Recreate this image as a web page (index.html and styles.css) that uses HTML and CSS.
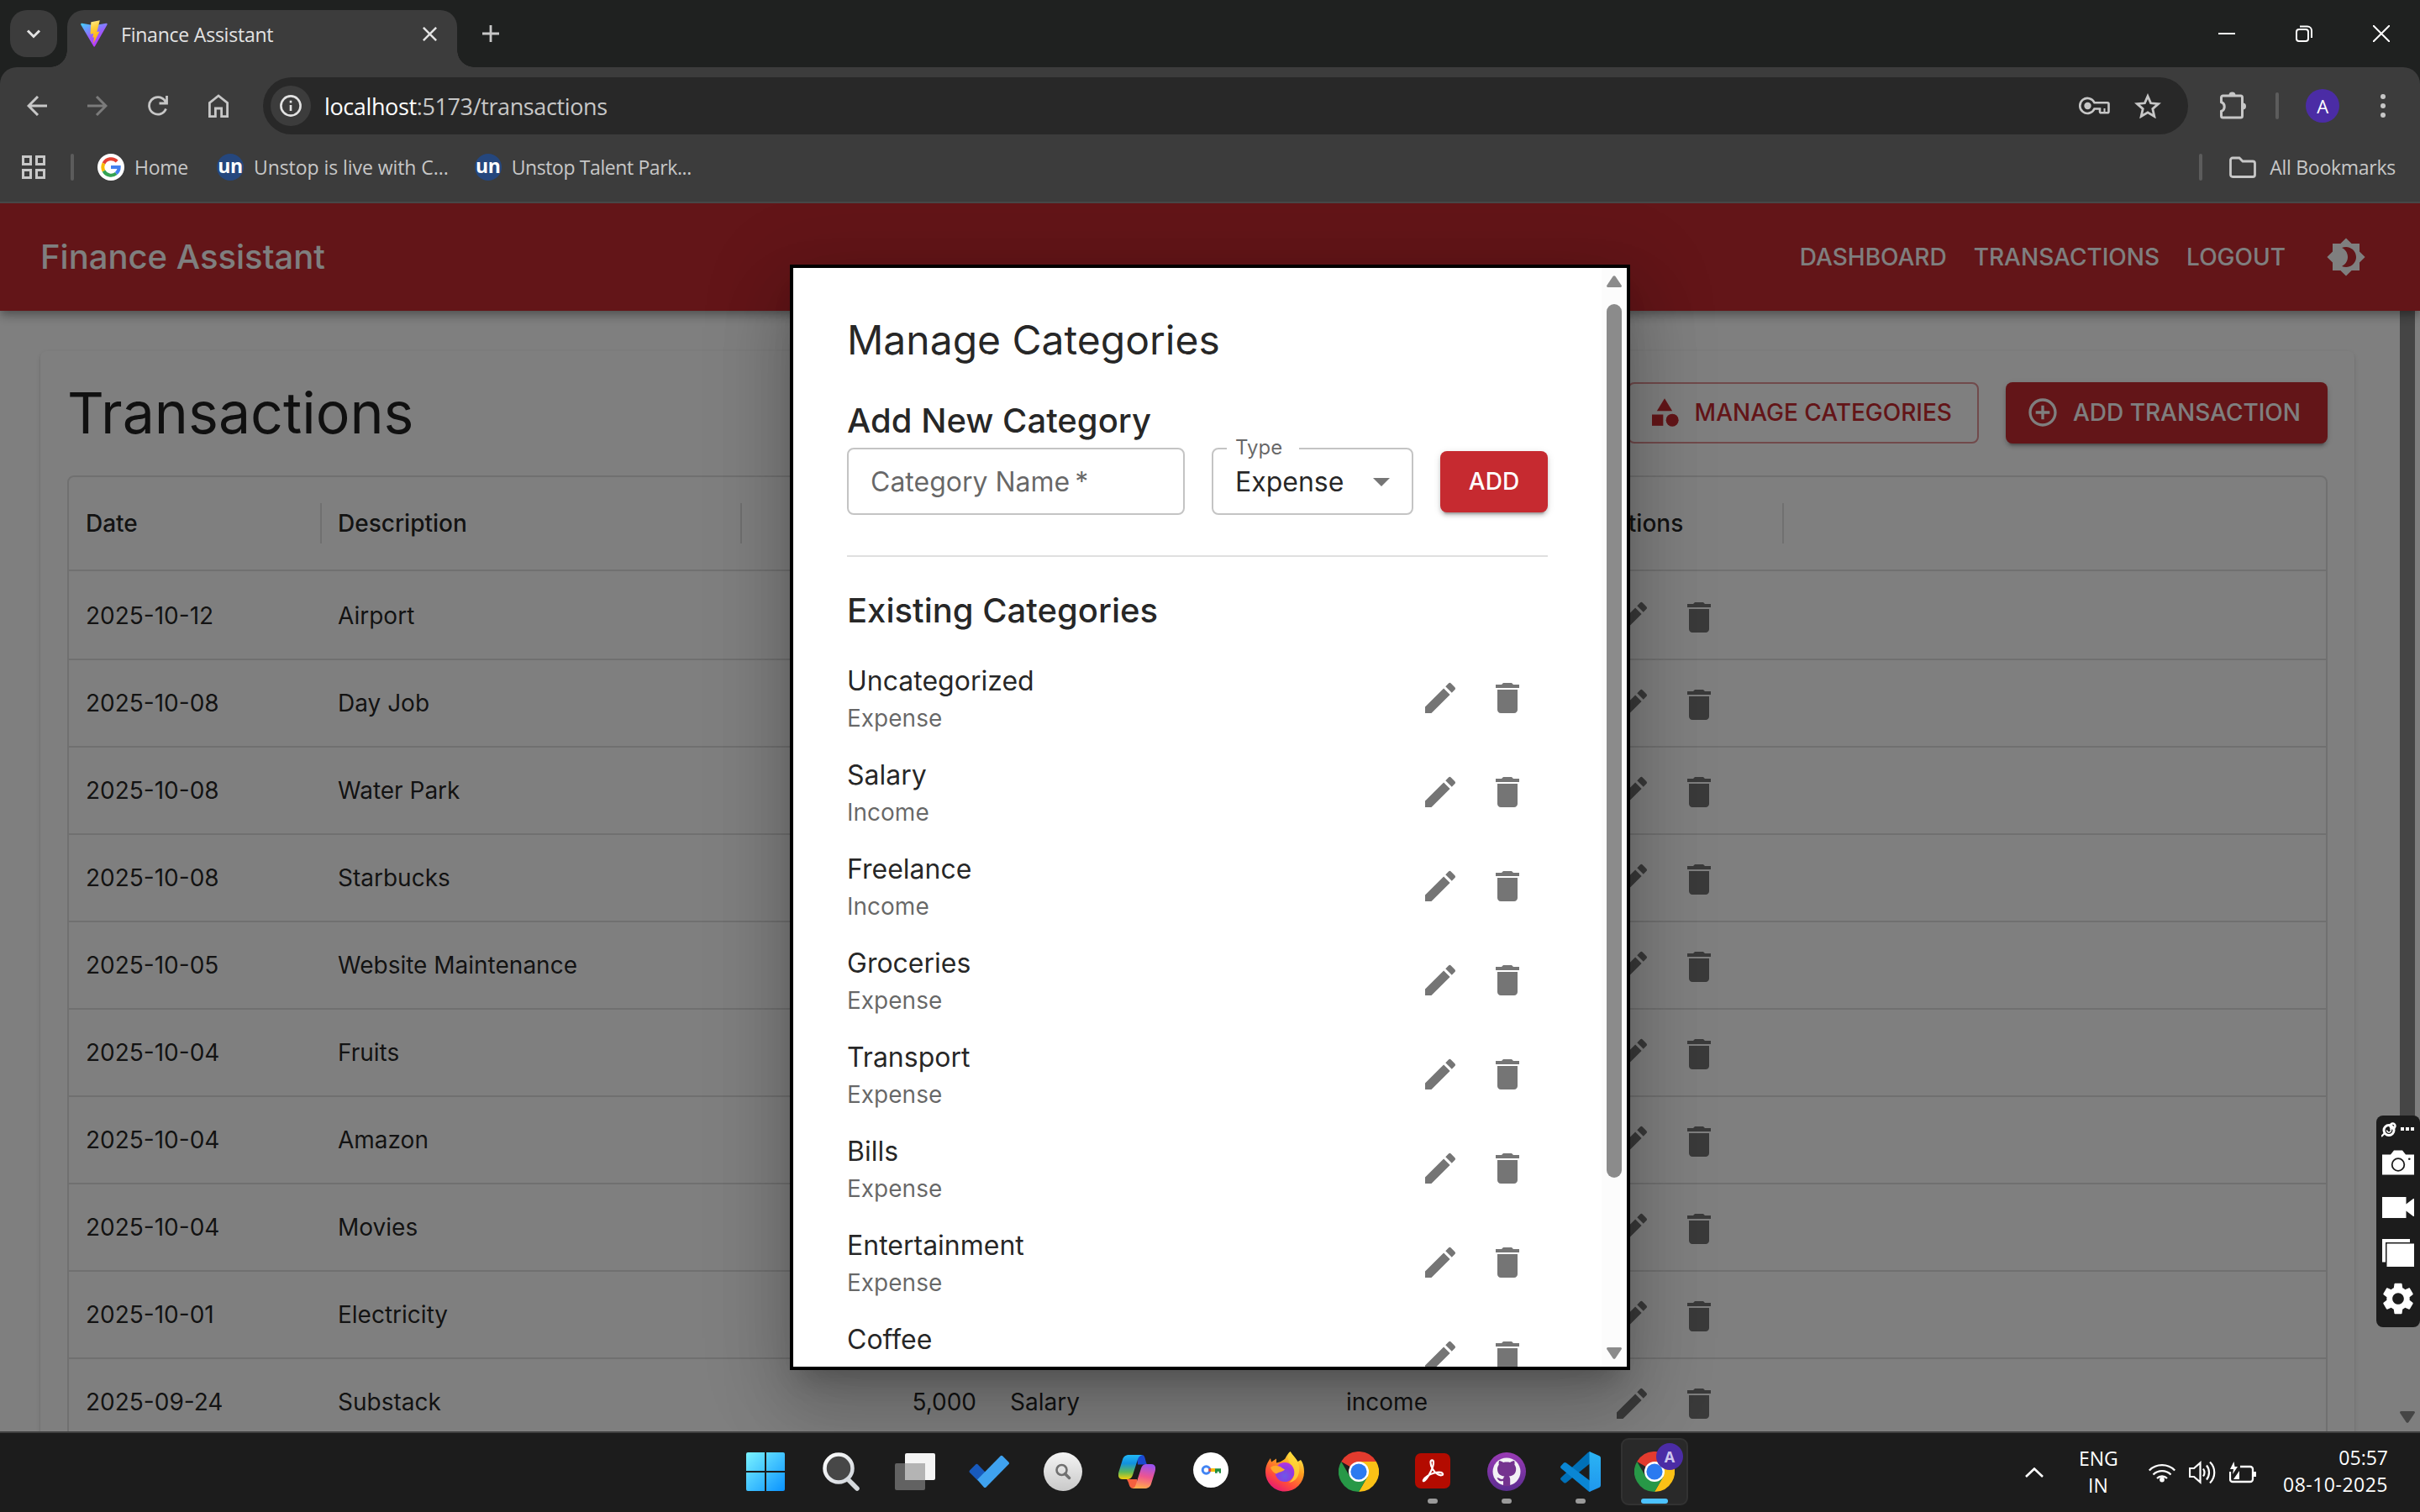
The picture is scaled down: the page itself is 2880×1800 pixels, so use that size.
FILE: index.html
```html
<!DOCTYPE html>
<html lang="en">
<head>
<meta charset="utf-8">
<title>Finance Assistant</title>
<link rel="stylesheet" href="styles.css">
</head>
<body>
<svg class="defs" width="0" height="0">
  <defs>
    <linearGradient id="vite-a" x1="0" y1="0" x2="0.6" y2="1"><stop offset="0" stop-color="#41d1ff"/><stop offset="0.6" stop-color="#9b5cff"/><stop offset="1" stop-color="#bd34fe"/></linearGradient>
    <linearGradient id="vite-b" x1="0.4" y1="0" x2="0.6" y2="1"><stop offset="0" stop-color="#ffea83"/><stop offset="0.3" stop-color="#ffcf3a"/><stop offset="1" stop-color="#ffa800"/></linearGradient>
    <linearGradient id="win" x1="0" y1="0" x2="1" y2="1" gradientUnits="objectBoundingBox"><stop offset="0" stop-color="#7af3ff"/><stop offset="1" stop-color="#0a93ff"/></linearGradient>
    <linearGradient id="lens" x1="0" y1="0" x2="1" y2="1"><stop offset="0" stop-color="#fff"/><stop offset="1" stop-color="#cfd4da"/></linearGradient>
    <linearGradient id="disc" x1="0" y1="0" x2="0" y2="1"><stop offset="0" stop-color="#f4f4f4"/><stop offset="1" stop-color="#c9c9c9"/></linearGradient>
    <linearGradient id="cop-a" x1="0" y1="0" x2="0" y2="1"><stop offset="0" stop-color="#22b8f5"/><stop offset="0.35" stop-color="#1191e0"/><stop offset="0.7" stop-color="#5cb85a"/><stop offset="1" stop-color="#f5cf0a"/></linearGradient>
    <linearGradient id="cop-b" x1="0.6" y1="0" x2="0.4" y2="1"><stop offset="0" stop-color="#9a52f0"/><stop offset="0.5" stop-color="#ee5590"/><stop offset="1" stop-color="#ffab4a"/></linearGradient>
    <linearGradient id="fox-a" x1="0.8" y1="0" x2="0.2" y2="1"><stop offset="0" stop-color="#fff44f"/><stop offset="0.35" stop-color="#ff9f1e"/><stop offset="0.7" stop-color="#ff4a3c"/><stop offset="1" stop-color="#e1107e"/></linearGradient>
    <radialGradient id="fox-b" cx="0.5" cy="0.7" r="0.7"><stop offset="0" stop-color="#6a5ae8"/><stop offset="0.6" stop-color="#9038e0"/><stop offset="1" stop-color="#b833e1"/></radialGradient>
    <linearGradient id="gh" x1="0" y1="0" x2="0" y2="1"><stop offset="0" stop-color="#9a3bb5"/><stop offset="1" stop-color="#5b2d90"/></linearGradient>
    <linearGradient id="vs" x1="0" y1="0" x2="0" y2="1"><stop offset="0" stop-color="#2bb4f4"/><stop offset="1" stop-color="#1f97ee"/></linearGradient>
  </defs>
  <symbol id="i-edit" viewBox="0 0 24 24"><path d="M3 17.25V21h3.75L17.81 9.94l-3.75-3.75zM20.71 7.04c.39-.39.39-1.02 0-1.41l-2.34-2.34a.996.996 0 0 0-1.41 0l-1.83 1.83 3.75 3.75z"/></symbol>
  <symbol id="i-delete" viewBox="0 0 24 24"><path d="M6 19c0 1.1.9 2 2 2h8c1.1 0 2-.9 2-2V7H6zM19 4h-3.5l-1-1h-5l-1 1H5v2h14z"/></symbol>
  <symbol id="i-chrome" viewBox="0 0 48 48">
    <path d="M24 24 3.2 12A24 24 0 0 1 44.8 12z" fill="#e33b2e"/>
    <path d="M24 24 44.8 12A24 24 0 0 1 24 48L34.4 30z" fill="#fbc116"/>
    <path d="M24 24h10.4L24 48A24 24 0 0 1 3.2 12L13.6 30z" fill="#279847"/>
    <path d="M24 12h20.8a24 24 0 0 1-10.4 18z" fill="#fbc116"/>
    <path d="M34.4 30 24 48 22 34z" fill="#279847"/>
    <circle cx="24" cy="24" r="12" fill="#fff"/><circle cx="24" cy="24" r="9.6" fill="#2b7af0"/>
  </symbol>
</svg>

<header class="browser">
  <div class="tabstrip">
    <button class="tab-search"><svg width="20" height="20" viewBox="0 0 20 20" fill="none" stroke="#e3e3e3" stroke-width="3"><path d="m3 6.500 7 7 7-7"/></svg></button>
    <div class="tab">
      <svg width="32" height="32" viewBox="0 0 32 32"><path d="M31.500 5.500 17 31a1 1 0 0 1-1.700 0L.300 5.500C-.1 4.500.500 3.500 1.600 3.700L16 6.300l14.300-2.600c1.100-.2 1.700.8 1.200 1.800z" fill="url(#vite-a)"/><path d="m22.800.300-10.200 2a.5.5 0 0 0-.3.400l-.7 13.500c0 .3.300.5.600.4l3-.6-.9 4.800 2-.5-1.500 8 7.700-14.900-3.200.600z" fill="url(#vite-b)"/></svg>
      <span class="tab-title">Finance Assistant</span>
      <svg class="tab-close" width="20" height="20" viewBox="0 0 20 20" stroke="#e3e3e3" stroke-width="3"><path d="M1 1l18 18M19 1 1 19"/></svg>
    </div>
    <svg class="newtab" width="20" height="20" viewBox="0 0 20 20" stroke="#c7c7c7" stroke-width="2.800"><path d="M10 0v20M0 10h20"/></svg>
    <div class="window-controls">
      <svg width="20" height="20" viewBox="0 0 20 20" stroke="#fff" stroke-width="2"><path d="M0 10h20"/></svg>
      <svg width="20" height="20" viewBox="0 0 20 20" fill="none" stroke="#fff" stroke-width="2"><rect x="1" y="5" width="14" height="14" rx="3"/><path d="M5 1.500h9a5 5 0 0 1 5 5V15"/></svg>
      <svg width="20" height="20" viewBox="0 0 20 20" stroke="#fff" stroke-width="2"><path d="M0 0l20 20M20 0 0 20"/></svg>
    </div>
  </div>
  <div class="toolbar">
    <div class="nav-icons">
      <svg width="24" height="24" viewBox="0 0 24 24" fill="none" stroke="#c7c7c7" stroke-width="3"><path d="M24 12H2M13 1 2 12l11 11"/></svg>
      <svg width="24" height="24" viewBox="0 0 24 24" fill="none" stroke="#7b7b7b" stroke-width="3"><path d="M0 12h22M11 1l11 11-11 11"/></svg>
      <svg width="24" height="24" viewBox="0 0 24 24" fill="none" stroke="#c7c7c7" stroke-width="2.800"><path d="M21.500 15.500A10.300 10.300 0 1 1 20 5.500l2 3.500M22.500 0v9h-9"/></svg>
      <svg width="24" height="28" viewBox="0 0 24 28" fill="none" stroke="#c7c7c7" stroke-width="2.800"><path d="M1.400 26.600V10.500L12 2l10.600 8.500v16.100h-7V17H8.400v9.600z"/></svg>
    </div>
    <div class="omnibox">
      <span class="site-info"><svg width="26" height="26" viewBox="0 0 26 26" fill="none" stroke="#e3e3e3" stroke-width="2.600"><circle cx="13" cy="13" r="11.600"/><path d="M13 12v7M13 6.800v2.800"/></svg></span>
      <span class="url"><b>localhost</b>:5173/transactions</span>
      <svg class="key" width="37" height="22" viewBox="0 0 37 22" fill="none" stroke="#c7c7c7" stroke-width="2.600"><path d="M18.500 7.300h15.500a1.500 1.500 0 0 1 1.500 1.500v9a1.500 1.500 0 0 1-1.500 1.500h-7.500a1.500 1.500 0 0 1-1.500-1.500V14.500h-6.500A9 9 0 1 1 18.500 7.300z"/><path d="M30.500 14v5" stroke-width="2"/><circle cx="10.500" cy="11" r="4.200" fill="#c7c7c7" stroke="none"/></svg>
      <svg class="star" width="32" height="30" viewBox="0 0 32 30" fill="none" stroke="#c7c7c7" stroke-width="2.800"><path d="m16 3.500 3.600 8.300 9 .8-6.800 6 2 8.900-7.800-4.700-7.800 4.700 2-8.900-6.800-6 9-.8z"/></svg>
    </div>
    <svg class="puzzle" width="36" height="34" viewBox="0 0 36 34" fill="none" stroke="#c7c7c7" stroke-width="3"><path d="M5.500 6h21a2 2 0 0 1 2 2v22a2 2 0 0 1-2 2H5.500a2 2 0 0 1-2-2v-5.500c5-2 5-9 0-11V8a2 2 0 0 1 2-2z"/><path d="M12.500 5.500a4 4 0 0 1 8 0zM29 14.500a4 4 0 0 1 0 8z" fill="#c7c7c7" stroke="none"/></svg>
    <i class="sep"></i>
    <span class="avatar">A</span>
    <svg class="kebab" width="6" height="28" viewBox="0 0 6 28" fill="#c7c7c7"><circle cx="3" cy="3" r="3"/><circle cx="3" cy="14" r="3"/><circle cx="3" cy="25" r="3"/></svg>
  </div>
  <div class="bookmarks">
    <svg width="28" height="28" viewBox="0 0 28 28" fill="none" stroke="#c7c7c7" stroke-width="3"><path d="M1.500 1.500h9v9h-9zM17.500 1.500h9v9h-9zM1.500 17.500h9v9h-9zM17.500 17.500h9v9h-9z"/></svg>
    <i class="sep"></i>
    <a class="bm"><svg width="32" height="32" viewBox="0 0 32 32"><circle cx="16" cy="16" r="16" fill="#fff"/><g fill="none" stroke-width="4"><path d="M23.200 9.200A9.700 9.700 0 0 0 7.500 11.500" stroke="#e34133"/><path d="M7.500 11.500a9.700 9.700 0 0 0 0 9" stroke="#f9bb05"/><path d="M7.500 20.500a9.700 9.700 0 0 0 14.700 3" stroke="#34a353"/><path d="M16 16h9.700a9.700 9.700 0 0 1-3.500 7.500" stroke="#4280ef"/></g></svg>Home</a>
    <a class="bm wide"><span class="un">un</span>Unstop is live with C...</a>
    <a class="bm narrow"><span class="un">un</span>Unstop Talent Park...</a>
    <i class="sep sep-right"></i>
    <a class="bm all"><svg width="32" height="26" viewBox="0 0 32 26" fill="none" stroke="#c7c7c7" stroke-width="2.800"><path d="M4 2h8l4 4h12a2.500 2.500 0 0 1 2.500 2.500V22a2.500 2.500 0 0 1-2.500 2.500H4A2.500 2.500 0 0 1 1.500 22V4.500A2.500 2.500 0 0 1 4 2z"/></svg>All Bookmarks</a>
  </div>
</header>

<main class="page">
  <nav class="appbar">
    <span class="brand">Finance Assistant</span>
    <a>DASHBOARD</a><a>TRANSACTIONS</a><a>LOGOUT</a>
    <svg width="48" height="48" viewBox="0 0 24 24" fill="#fff"><path d="M20 8.690V4h-4.690L12 .690 8.690 4H4v4.690L.690 12 4 15.310V20h4.690L12 23.310 15.310 20H20v-4.690L23.310 12zM12 18c-.89 0-1.740-.2-2.500-.55C11.560 16.500 13 14.420 13 12s-1.440-4.500-3.500-5.450C10.260 6.200 11.110 6 12 6c3.310 0 6 2.690 6 6s-2.690 6-6 6"/></svg>
  </nav>
  <div class="content">
    <section class="paper">
      <div class="paper-head">
        <h1>Transactions</h1>
        <button class="btn outlined"><svg width="40" height="40" viewBox="0 0 24 24"><path d="m12 2-5.500 9h11z"/><circle cx="17.500" cy="17.500" r="4.500"/><path d="M3 13.500h8v8H3z"/></svg>MANAGE CATEGORIES</button>
        <button class="btn contained"><svg width="40" height="40" viewBox="0 0 24 24"><path d="M13 7h-2v4H7v2h4v4h2v-4h4v-2h-4zm-1-5C6.480 2 2 6.480 2 12s4.480 10 10 10 10-4.480 10-10S17.520 2 12 2m0 18c-4.410 0-8-3.590-8-8s3.590-8 8-8 8 3.590 8 8-3.590 8-8 8"/></svg>ADD TRANSACTION</button>
      </div>
      <div class="grid">
        <div class="row head"><span>Date</span><span>Description</span><span></span><span></span><span></span><span>Actions</span></div>
        <div class="row"><span>2025-10-12</span><span>Airport</span><span></span><span></span><span></span><span class="act"><svg><use href="#i-edit"/></svg><svg><use href="#i-delete"/></svg></span></div>
        <div class="row"><span>2025-10-08</span><span>Day Job</span><span></span><span></span><span></span><span class="act"><svg><use href="#i-edit"/></svg><svg><use href="#i-delete"/></svg></span></div>
        <div class="row"><span>2025-10-08</span><span>Water Park</span><span></span><span></span><span></span><span class="act"><svg><use href="#i-edit"/></svg><svg><use href="#i-delete"/></svg></span></div>
        <div class="row"><span>2025-10-08</span><span>Starbucks</span><span></span><span></span><span></span><span class="act"><svg><use href="#i-edit"/></svg><svg><use href="#i-delete"/></svg></span></div>
        <div class="row"><span>2025-10-05</span><span>Website Maintenance</span><span></span><span></span><span></span><span class="act"><svg><use href="#i-edit"/></svg><svg><use href="#i-delete"/></svg></span></div>
        <div class="row"><span>2025-10-04</span><span>Fruits</span><span></span><span></span><span></span><span class="act"><svg><use href="#i-edit"/></svg><svg><use href="#i-delete"/></svg></span></div>
        <div class="row"><span>2025-10-04</span><span>Amazon</span><span></span><span></span><span></span><span class="act"><svg><use href="#i-edit"/></svg><svg><use href="#i-delete"/></svg></span></div>
        <div class="row"><span>2025-10-04</span><span>Movies</span><span></span><span></span><span></span><span class="act"><svg><use href="#i-edit"/></svg><svg><use href="#i-delete"/></svg></span></div>
        <div class="row"><span>2025-10-01</span><span>Electricity</span><span></span><span></span><span></span><span class="act"><svg><use href="#i-edit"/></svg><svg><use href="#i-delete"/></svg></span></div>
        <div class="row"><span>2025-09-24</span><span>Substack</span><span class="num">5,000</span><span>Salary</span><span>income</span><span class="act"><svg><use href="#i-edit"/></svg><svg><use href="#i-delete"/></svg></span></div>
      </div>
    </section>
    <div class="page-scroll"><i class="thumb"></i><svg width="18" height="14" viewBox="0 0 18 14" fill="#8b8b8b"><path d="M1.500 0h15A1.500 1.500 0 0 1 17.700 2.300L10.500 13a2 2 0 0 1-3 0L.300 2.300A1.500 1.500 0 0 1 1.500 0z"/></svg></div>
  </div>

  <div class="backdrop">
    <div class="modal">
      <div class="modal-body">
        <h2>Manage Categories</h2>
        <h3>Add New Category</h3>
        <div class="form">
          <div class="field name">Category Name<span class="req">*</span></div>
          <div class="field type"><label>Type</label>Expense<svg width="48" height="48" viewBox="0 0 24 24" fill="#757575"><path d="m7 10 5 5 5-5z"/></svg></div>
          <button class="btn contained add">ADD</button>
        </div>
        <hr>
        <h3>Existing Categories</h3>
        <ul class="cats">
          <li><div><p>Uncategorized</p><small>Expense</small></div><svg><use href="#i-edit"/></svg><svg><use href="#i-delete"/></svg></li>
          <li><div><p>Salary</p><small>Income</small></div><svg><use href="#i-edit"/></svg><svg><use href="#i-delete"/></svg></li>
          <li><div><p>Freelance</p><small>Income</small></div><svg><use href="#i-edit"/></svg><svg><use href="#i-delete"/></svg></li>
          <li><div><p>Groceries</p><small>Expense</small></div><svg><use href="#i-edit"/></svg><svg><use href="#i-delete"/></svg></li>
          <li><div><p>Transport</p><small>Expense</small></div><svg><use href="#i-edit"/></svg><svg><use href="#i-delete"/></svg></li>
          <li><div><p>Bills</p><small>Expense</small></div><svg><use href="#i-edit"/></svg><svg><use href="#i-delete"/></svg></li>
          <li><div><p>Entertainment</p><small>Expense</small></div><svg><use href="#i-edit"/></svg><svg><use href="#i-delete"/></svg></li>
          <li><div><p>Coffee</p></div><svg><use href="#i-edit"/></svg><svg><use href="#i-delete"/></svg></li>
        </ul>
      </div>
      <div class="modal-scroll">
        <svg width="18" height="14" viewBox="0 0 18 14" fill="#8b8b8b"><path d="M1.500 14h15a1.500 1.500 0 0 0 1.200-2.300L10.500 1a2 2 0 0 0-3 0L.300 11.700A1.500 1.500 0 0 0 1.500 14z"/></svg>
        <i class="thumb"></i>
        <svg width="18" height="14" viewBox="0 0 18 14" fill="#8b8b8b"><path d="M1.500 0h15A1.500 1.500 0 0 1 17.700 2.300L10.500 13a2 2 0 0 1-3 0L.300 2.300A1.500 1.500 0 0 1 1.500 0z"/></svg>
      </div>
    </div>
  </div>

  <aside class="recorder">
    <svg width="40" height="18" viewBox="0 0 40 18"><g fill="none" stroke="#fff"><circle cx="9" cy="9.500" r="6" stroke-width="3"/><circle cx="13.500" cy="4.500" r="3" stroke-width="2.400"/><path d="m0 17 4-4" stroke-width="2"/><path d="M6.500 9.500a2.500 2.500 0 1 0 4-2" stroke-width="1.600"/></g><path d="M23 6h4v4h-4zM29 6h4v4h-4zM35 6h4v4h-4z" fill="#fff"/></svg>
    <svg width="38" height="30" viewBox="0 0 38 30"><path d="M0 5.500h10L14 .500h10l4 5h10V29.500H0z" fill="#fff"/><circle cx="19" cy="17.500" r="7.300" fill="none" stroke="#1c1c1c" stroke-width="1.800"/><circle cx="32.300" cy="10.800" r="1.300" fill="#1c1c1c"/></svg>
    <svg width="38" height="25" viewBox="0 0 38 25" fill="#fff"><path d="M0 0h28.500v8.500L37 2h1v21h-1l-8.500-6.500V25H0z"/></svg>
    <svg width="38" height="33" viewBox="0 0 38 33" fill="#fff"><path d="M0 0h33v4H4v23.500H0z"/><path d="M5.500 5.500H38V33H5.500z"/></svg>
    <svg width="38" height="38" viewBox="2.200 2 19.600 20" fill="#fff"><path d="M19.140 12.940c.04-.3.060-.61.060-.94 0-.32-.02-.64-.07-.94l2.030-1.580c.18-.14.230-.41.120-.61l-1.920-3.320c-.12-.22-.37-.29-.59-.22l-2.390.960c-.5-.38-1.030-.7-1.620-.94l-.36-2.540c-.04-.24-.24-.41-.48-.41h-3.840c-.24 0-.43.170-.47.410l-.36 2.540c-.59.240-1.130.570-1.620.940l-2.390-.96c-.22-.08-.47 0-.59.220L2.740 8.870c-.12.210-.08.470.120.610l2.030 1.580c-.05.300-.09.630-.09.940s.02.640.070.940l-2.030 1.580c-.18.140-.23.410-.12.610l1.920 3.320c.12.220.37.290.59.220l2.390-.96c.5.380 1.030.7 1.620.94l.36 2.540c.05.240.240.410.480.410h3.840c.24 0 .44-.17.470-.41l.36-2.540c.59-.24 1.130-.56 1.620-.94l2.390.96c.22.080.470 0 .590-.22l1.920-3.320c.12-.22.070-.47-.12-.61zM12 15.600c-1.980 0-3.600-1.620-3.600-3.600s1.620-3.600 3.600-3.600 3.600 1.620 3.600 3.600-1.620 3.600-3.600 3.600"/></svg>
  </aside>
</main>

<footer class="taskbar">
  <div class="apps">
    <span><svg width="46" height="46" viewBox="0 0 46 46" fill="url(#win)"><path d="M2 0h20v22H0V2a2 2 0 0 1 2-2zM24 0h20a2 2 0 0 1 2 2v20H24zM0 24h22v22H2a2 2 0 0 1-2-2zM24 24h22v20a2 2 0 0 1-2 2H24z"/></svg></span>
    <span><svg width="46" height="46" viewBox="0 0 46 46"><path d="m31 32 11 11" stroke="#d5d9dd" stroke-width="5.500" stroke-linecap="round"/><circle cx="20" cy="19" r="16.500" fill="#474747" stroke="url(#lens)" stroke-width="4.500"/></svg></span>
    <span><svg width="50" height="46" viewBox="0 0 50 46"><rect x="13" y="1" width="36" height="32" rx="2" fill="#f4f4f4"/><rect x="1" y="13" width="36" height="32" rx="2" fill="#6c6c6c" fill-opacity=".88"/><path d="M13 13h24v20H13z" fill="#b4b4b4"/></svg></span>
    <span><svg width="48" height="40" viewBox="0 0 48 40"><path d="M1 18.500 8 11.500a2 2 0 0 1 2.800 0L20 21l-9.500 9.500L1 21a2 2 0 0 1 0-2.500z" fill="#185abd"/><path d="M10 29.500 37.500 1.500a2 2 0 0 1 2.800 0l7 7a2 2 0 0 1 0 2.800L20.500 38.500a2 2 0 0 1-2.600 0z" fill="#3fa2ef"/></svg></span>
    <span><svg width="46" height="46" viewBox="0 0 46 46"><circle cx="23" cy="23" r="23" fill="url(#disc)"/><circle cx="21.500" cy="21" r="6" fill="none" stroke="#707070" stroke-width="2.600"/><path d="m25.500 25.500 5 5" stroke="#707070" stroke-width="3.400" stroke-linecap="round"/></svg></span>
    <span><svg width="44" height="40" viewBox="0 0 44 40"><path d="M22 0h6c3 0 3.500 3 5 9l1 2.500H23z" fill="#1a49d0"/><path d="M10 29h12l1 11h-5c-4 0-5-3-6-7z" fill="#f5603f"/><path d="M13 0h17c-4 0-6 2-7.500 7L17 24c-1.200 3.500-3 5-6.500 5H5c-5 0-6-4-4.500-9L5 5.500C6.300 1.500 9 0 13 0z" fill="url(#cop-a)"/><path d="M31 40H15c4 0 5-2 6.500-7L27 16c1.200-3.500 3-5 6.500-5H39c5 0 6 4 4.500 9L39 34.500C37.700 38.500 35 40 31 40z" fill="url(#cop-b)"/></svg></span>
    <span><svg width="42" height="46" viewBox="0 0 42 46"><circle cx="21" cy="21" r="21" fill="#fff"/><path d="M20 21h6" stroke="#fbbc04" stroke-width="4"/><path d="M26 19.200h7v5.600h-2.300v-2h-2v2H26z" fill="#1e8e3e"/><circle cx="15.500" cy="21" r="4.300" fill="none" stroke="#4285f4" stroke-width="3"/><path d="M18.500 19.200h2.500v3.600h-2.500z" fill="#ea4335"/></svg></span>
    <span><svg width="48" height="48" viewBox="0 0 48 48"><path d="M30.500 0c2 3.500 6.500 7.500 9 12l3.500-2c3.500 5 4 10 4 14.500A23 23 0 0 1 1 24.500C1 17 4 12 7 8l1 4.500 6-4v5l4-1c4-2 6-3 7-5C26.500 4.500 28 2 30.500 0z" fill="url(#fox-a)"/><circle cx="24" cy="24.500" r="11.500" fill="url(#fox-b)"/><path d="M7 19c5-4 11-2 17 2.500-3 3-7 2.500-10 5-3-1-6-4-7-7.500z" fill="#ffa72b"/><path d="M30.500 0C36 8 43 13 41 24c-1 8-6 12-12 13 8-6 8-15 3-21-4-4-6-10-1.500-16z" fill="#ffd838" fill-opacity=".75"/></svg></span>
    <span><svg width="48" height="48"><use href="#i-chrome"/></svg></span>
    <span class="running"><svg width="42" height="46" viewBox="0 0 42 46"><rect width="42" height="42" rx="7" fill="#b30b00" y="1"/><path d="M10 33c2-4 8-7 13-8.500 4-1 9-1 10 1s-3 2.500-6 .5c-5-3-8.500-9-8.500-14 0-3.500 3.500-3.500 3.500 0 0 6-5 15-8.500 19.500C11.500 34.500 9 35 10 33z" fill="none" stroke="#fff" stroke-width="2.200"/></svg></span>
    <span class="running"><svg width="46" height="46" viewBox="0 0 46 46"><circle cx="23" cy="23" r="23" fill="url(#gh)"/><circle cx="23" cy="23" r="16.500" fill="#f3f2f5"/><path d="M19 40v-6c-5 1-6-1.500-7.500-3.500 3-1 3 2.500 7.500 1 .2-1.500.8-2.300 1.500-3-5-.6-8.500-2.500-8.500-9 0-2 .8-3.500 1.800-4.800-.3-1.500-.3-3 .3-4.800 2 0 3.500 1 5 2 2.500-.6 5.500-.6 8 0 1.500-1 3-2 5-2 .6 1.800.6 3.300.3 4.800 1 1.300 1.800 2.800 1.800 4.800 0 6.500-3.500 8.400-8.500 9 1 1 1.500 2.300 1.500 4V40z" fill="#74338f"/></svg></span>
    <span class="running"><svg width="48" height="48" viewBox="0 0 48 48"><path d="M35.500 0v14L7 37c-1 .8-2 .7-3 0L.800 34c-1-1-1-2 0-3L33 1z" fill="#0070b8"/><path d="M.800 17 4 13.500c1-.8 2-.8 3 0L35.500 35v13c-1 0-2-.5-3-1.500L.800 20c-1-1-1-2 0-3z" fill="#0a86d4"/><path d="M34.500 0 46.500 5.300A3 3 0 0 1 48 8v32a3 3 0 0 1-1.500 2.700L34.500 48z" fill="url(#vs)"/></svg></span>
    <span class="running active"><i class="tile"><svg width="48" height="48"><use href="#i-chrome"/></svg><b>A</b></i></span>
  </div>
  <div class="tray">
    <svg class="up" width="22" height="12" viewBox="0 0 22 12" fill="none" stroke="#fff" stroke-width="2.600"><path d="m1 11 10-9.500L21 11"/></svg>
    <div class="lang">ENG<br>IN</div>
    <svg width="32" height="24" viewBox="0 0 32 24" fill="none" stroke="#fff" stroke-width="2.300"><path d="M.800 9.500a21.500 21.500 0 0 1 30.400 0M5.500 14.500a15 15 0 0 1 21 0M10 19a8.500 8.500 0 0 1 12 0"/><circle cx="16" cy="20.500" r="2.900" fill="#fff" stroke="none"/></svg>
    <svg width="32" height="28" viewBox="0 0 32 28" fill="none" stroke="#fff" stroke-width="2.200"><path d="M1 9h5l7.500-6.500v23L6 19H1zM17 9.500c2 3 2 6 0 9M21 5.500c4 5 4 12 0 17M25 1.500c7 7 7 18 0 25"/></svg>
    <svg width="32" height="26" viewBox="0 0 32 26"><path d="M13 6h12a3 3 0 0 1 3 3v12a3 3 0 0 1-3 3H4a3 3 0 0 1-3-3V12" fill="none" stroke="#fff" stroke-width="2.300"/><path d="M28 12h4v6h-4zM5.500 0 1 9h4l-1 6 6-9H6.500zM12 11v10H5z" fill="#fff"/></svg>
    <div class="clock">05:57<br><span>08-10-2025</span></div>
  </div>
</footer>
</body>
</html>
```
FILE: styles.css
```css
*, *::before, *::after { box-sizing: border-box; }

:root {
  --ui: "Open Sans", "Noto Sans", sans-serif;
  --app: Inter, "Liberation Sans", sans-serif;
  --red: #c62a30;
  --line: rgba(0, 0, 0, .12);
  --text: rgba(0, 0, 0, .87);
  --button-shadow: 0 6px 2px -4px rgba(0, 0, 0, .2), 0 4px 4px rgba(0, 0, 0, .14), 0 2px 10px rgba(0, 0, 0, .12);
}

body {
  margin: 0;
  width: 2880px;
  height: 1800px;
  overflow: hidden;
  display: flex;
  flex-direction: column;
  font-family: var(--app);
}

svg { display: block; flex: none; }
.defs { position: absolute; }
h1, h2, h3, p, ul { margin: 0; padding: 0; }
button { border: 0; padding: 0; font-family: inherit; }

/* Browser frame */
.browser {
  flex: none;
  height: 242px;
  background: #1f2120;
  font-family: var(--ui);
  font-size: 23px;
  letter-spacing: -.27px;
  color: #c7c7c7;
}
.tabstrip { display: flex; align-items: center; height: 80px; padding-left: 12px; }
.tab-search {
  width: 56px; height: 56px; border-radius: 20px;
  background: #3c3c3c;
  display: grid; place-items: center;
}
.tab {
  position: relative;
  align-self: flex-end;
  width: 464px; height: 68px;
  margin-left: 12px; padding: 0 24px 12px 16px;
  border-radius: 20px 20px 0 0;
  background: #3c3c3c;
  color: #e3e3e3;
  display: flex; align-items: center;
}
.tab::before, .tab::after {
  content: "";
  position: absolute;
  bottom: 0;
  width: 20px; height: 20px;
}
.tab::before { left: -20px; background: radial-gradient(circle at 0 0, transparent 19.500px, #3c3c3c 20px); }
.tab::after { right: -20px; background: radial-gradient(circle at 100% 0, transparent 19.500px, #3c3c3c 20px); }
.tab-title { margin-left: 16px; padding-top: 2px; letter-spacing: -.22px; }
.tab-close { margin-left: auto; width: 17px; height: 17px; }
.newtab { margin-left: 30px; }
.window-controls { margin-left: auto; display: flex; gap: 72px; padding-right: 36px; }

.toolbar {
  display: flex; align-items: center;
  height: 92px;
  background: #3c3c3c;
  border-radius: 20px 20px 0 0;
}
.nav-icons { display: flex; align-items: center; gap: 48px; padding-left: 32px; width: 313px; }
.omnibox {
  display: flex; align-items: center;
  width: 2291px; height: 68px;
  padding-left: 9px;
  border-radius: 34px;
  background: #282828;
}
.site-info {
  width: 48px; height: 48px; border-radius: 50%;
  background: #3c3c3c;
  display: grid; place-items: center;
}
.url { margin-left: 16px; font-size: 27px; letter-spacing: -.38px; }
.url b { font-weight: 400; color: #fff; }
.key { margin-left: auto; }
.star { margin: 0 32px 0 29px; }
.puzzle { margin-left: 36px; margin-bottom: 3px; }
.sep { width: 4px; height: 32px; border-radius: 2px; background: #5c5c5c; }
.toolbar .sep { margin-left: 32px; }
.avatar {
  width: 40px; height: 40px; margin-left: 32px;
  border-radius: 50%;
  background: #4b2ca5; color: #fff;
  font-size: 22px; line-height: 40px; text-align: center;
}
.kebab { margin-left: 49px; }

.bookmarks {
  display: flex; align-items: center;
  height: 70px;
  padding: 0 29px 14px 26px;
  background: #3c3c3c;
  border-bottom: 2px solid #474747;
}
.bookmarks > .sep { margin-left: 30px; }
.bm { display: flex; align-items: center; gap: 12px; margin-left: 34px; white-space: nowrap; }
.wide { letter-spacing: -.06px; }
.narrow { letter-spacing: -.4px; margin-left: 31px; }
.bookmarks .sep-right { margin-left: auto; }
.bookmarks > .sep + .bm { margin-left: 28px; }
.bookmarks > .sep-right + .all { margin-left: 32px; gap: 16px; }
.un {
  width: 32px; height: 32px; border-radius: 50%;
  background: #25477e; color: #fff;
  font-size: 23px; font-weight: 700; line-height: 28px;
  letter-spacing: -.5px;
  display: flex; justify-content: center;
}

/* Application page */
.page { position: relative; flex: none; height: 1462px; overflow: hidden; background: #fff; }
.appbar {
  position: relative;
  display: flex; align-items: center;
  height: 128px; padding: 0 64px 0 48px;
  background: var(--red); color: #fff;
  box-shadow: 0 4px 8px -2px rgba(0, 0, 0, .2), 0 8px 10px rgba(0, 0, 0, .14), 0 2px 20px rgba(0, 0, 0, .12);
  font-size: 28px; font-weight: 500;
}
.brand { margin-right: auto; font-size: 40px; padding-bottom: 1px; }
.appbar a { margin-left: 32px; }
.appbar svg { margin-left: 48px; }

.content { display: flex; height: 1334px; }
.paper {
  width: 2754px; height: 1500px;
  margin: 48px 54px 0 48px;
  padding: 32px;
  border-radius: 8px;
  box-shadow: 0 4px 2px -2px rgba(0, 0, 0, .2), 0 2px 2px rgba(0, 0, 0, .14), 0 2px 6px rgba(0, 0, 0, .12);
}
.paper-head { display: flex; align-items: center; gap: 32px; height: 84px; margin-bottom: 32px; padding-bottom: 1px; }
h1 { margin-right: auto; padding-bottom: 2px; font-size: 68px; font-weight: 400; line-height: 84px; color: var(--text); }
.btn {
  display: flex; align-items: center;
  height: 73px; padding: 0 32px 0 24px;
  border-radius: 8px;
  font-size: 28px; font-weight: 500;
  white-space: nowrap;
}
.btn svg { margin-right: 16px; fill: currentColor; }
.outlined { background: none; color: var(--red); border: 2px solid rgba(198, 42, 48, .5); padding: 0 30px 0 22px; }
.contained { background: var(--red); color: #fff; box-shadow: var(--button-shadow); }
.paper-head .outlined { padding-bottom: 1px; }
.paper-head .contained { padding-bottom: 1px; }

.grid {
  height: 1400px;
  border: 2px solid var(--line);
  border-radius: 8px;
  font-size: 28px;
  color: var(--text);
}
.row {
  display: grid;
  grid-template-columns: 300px 500px 300px 400px 300px 240px;
  align-items: center;
  height: 104px;
  border-top: 2px solid var(--line);
}
.row > span { padding: 0 20px; }
.head { height: 112px; border-top: 0; border-bottom: 2px solid var(--line); font-weight: 500; }
.head > span { height: 48px; line-height: 48px; margin-right: -1px; border-right: 2px solid var(--line); }
.head + .row { border-top-color: transparent; }
.row .num { text-align: right; }
.act { display: flex; gap: 32px; }
.row .act { padding: 4px 0 0 36px; }
.act svg, .cats svg { width: 48px; height: 48px; fill: rgba(0, 0, 0, .54); }

.page-scroll { width: 24px; display: flex; flex-direction: column; justify-content: space-between; padding-bottom: 10px; background: #fcfcfc; }
.page-scroll .thumb { width: 18px; height: 1080px; border-radius: 0 0 9px 9px; background: #8b8b8b; }

/* Dialog */
.backdrop {
  position: absolute; inset: 0;
  display: grid; place-items: center;
  background: rgba(0, 0, 0, .5);
}
.modal {
  width: 1000px; height: 1316px;
  display: flex;
  border: 4px solid #000;
  background: #fff;
  color: var(--text);
  box-shadow: 0 22px 30px -14px rgba(0, 0, 0, .2), 0 48px 76px 6px rgba(0, 0, 0, .14), 0 18px 92px 16px rgba(0, 0, 0, .12);
}
.modal-body { width: 962px; padding: 54px 64px 0; overflow: hidden; }
h2 { height: 64px; margin-bottom: 32px; font-size: 48px; font-weight: 400; line-height: 64px; }
h3 { font-size: 40px; font-weight: 500; line-height: 64px; }
.form { display: flex; align-items: center; gap: 32px; height: 80px; }
.field {
  display: flex; align-items: center;
  height: 80px; padding: 0 26px;
  border: 2px solid rgba(0, 0, 0, .23);
  border-radius: 8px;
  font-size: 32px;
}
.name { width: 402px; color: rgba(0, 0, 0, .6); }
.req { margin-left: 6px; }
.type { position: relative; width: 240px; }
.type label {
  position: absolute; left: 16px; top: -18px;
  width: 86px; padding-left: 10px;
  background: #fff; color: rgba(0, 0, 0, .6);
  font-size: 24px; line-height: 32px;
}
.type svg { margin: 0 -14px 0 auto; }
.add { width: 128px; padding: 0; justify-content: center; }
hr { margin: 48px 0 32px; border: 0; border-top: 2px solid var(--line); }
.cats { list-style: none; padding-top: 16px; }
.cats li { display: flex; align-items: center; gap: 32px; height: 112px; padding-right: 24px; }
.cats div { height: 88px; margin-right: auto; }
.cats p { font-size: 32px; line-height: 48px; }
.cats small { display: block; font-size: 28px; line-height: 40px; color: rgba(0, 0, 0, .6); }
.modal-scroll {
  width: 30px; height: 1308px;
  display: flex; flex-direction: column; align-items: center;
  padding: 9px 0;
  background: #fcfcfc;
}
.modal-scroll .thumb { width: 18px; height: 1040px; margin: 20px 0 auto; border-radius: 9px; background: #8b8b8b; }

/* Floating capture toolbar */
.recorder {
  position: absolute; right: 0; top: 1086px;
  width: 52px; height: 252px;
  border-radius: 8px;
  background: #1c1c1c;
  display: flex; flex-direction: column; align-items: center;
  padding-top: 8px;
}
.recorder svg:nth-child(2) { margin-top: 15px; }
.recorder svg:nth-child(3) { margin-top: 26px; }
.recorder svg:nth-child(4) { margin-top: 25px; }
.recorder svg:nth-child(5) { margin-top: 19px; }

/* Desktop taskbar */
.taskbar {
  flex: none;
  height: 96px;
  display: flex;
  border-top: 2px solid #404040;
  background: #1c1c1c;
  color: #fff;
  font-family: var(--ui); font-size: 23px;
}
.apps { display: flex; margin-left: 867px; }
.apps > span {
  width: 88px; height: 94px;
  display: grid; grid-template-rows: 92px; place-items: center;
  position: relative;
}
.apps > span:first-child { margin-right: 2px; }
.running::after {
  content: "";
  position: absolute; left: 38px; top: 78px;
  width: 12px; height: 6px; border-radius: 3px;
  background: #9a9a9a;
}
.active::after { left: 28px; width: 32px; background: #4cc2ff; }
.tile {
  position: relative;
  width: 80px; height: 80px;
  border: 2px solid #323232; border-radius: 9px;
  background: #292929;
  display: grid; place-items: center;
  font-style: normal;
}
.tile b {
  position: absolute; right: 4px; top: 4px;
  width: 32px; height: 32px; border-radius: 50%;
  background: #4b2ca5; color: #cfc6ee;
  font-size: 18px; line-height: 32px; text-align: center;
}
.tray { margin-left: auto; display: flex; align-items: center; padding-right: 38px; }
.up { margin-right: 42px; }
.lang { width: 46px; text-align: center; line-height: 32px; margin-right: 37px; margin-top: -2px; }
.tray svg + svg { margin-left: 16px; }
.clock { margin-left: 32px; text-align: right; line-height: 32px; margin-top: -4px; }
.clock span { letter-spacing: .5px; }
```
